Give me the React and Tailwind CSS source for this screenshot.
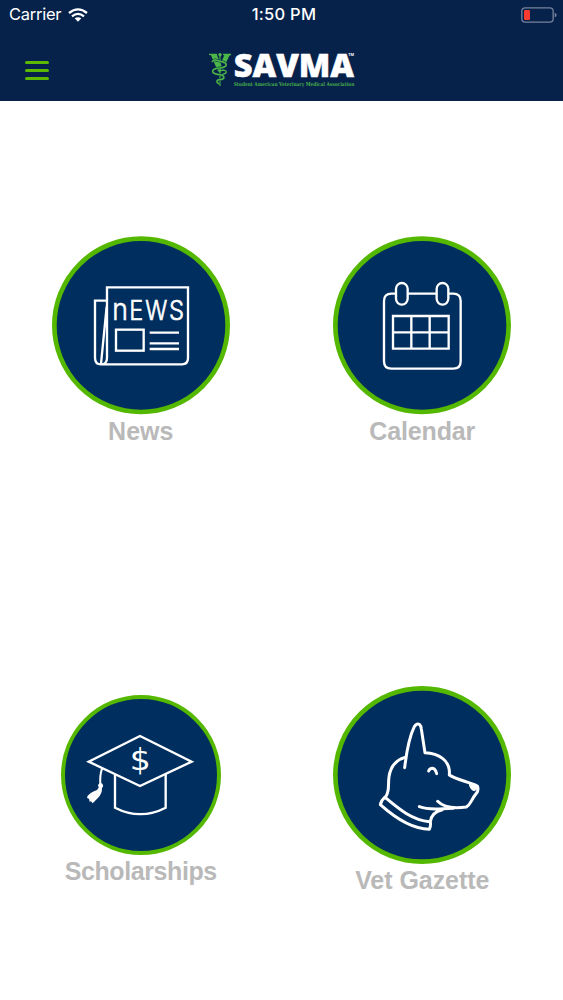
import React from 'react';

function StatusBar() {
  return (
    <div className="grid grid-cols-3 items-center h-[29px] pl-[9px] pr-[6px] text-white">
      <div className="flex items-center gap-[7px]">
        <span className="w-[52px] text-[16.5px] leading-[29px] tracking-[-0.25px]">Carrier</span>
        <svg width="20" height="14" viewBox="0 0 60 42" fill="none" stroke="currentColor" strokeWidth="7">
          <path d="M3 15 Q30 -7 57 15" />
          <path d="M12 25 Q30 10 48 25" />
          <path d="M20 31 Q30 24 40 31 L30 41Z" fill="currentColor" stroke="none" />
        </svg>
      </div>
      <span className="text-center text-[16.5px] leading-[29px] font-medium tracking-[0.25px] pl-[2px]">1:50 PM</span>
      <div className="flex items-center justify-end">
        <svg width="36" height="16" viewBox="0 0 108 48" fill="none">
          <rect x="2.5" y="2.5" width="94" height="43" rx="10" stroke="#76819a" strokeWidth="4" />
          <rect x="9" y="9" width="18" height="30" rx="4" fill="#ff3b30" />
          <path d="M101 17 Q107 19 107 24 Q107 29 101 31Z" fill="#76819a" />
        </svg>
      </div>
    </div>
  );
}

function Logo() {
  return (
    <svg width="165" height="60" viewBox="0 0 495 180" className="overflow-visible">
      <path d="M27 41 H51 V46 L65 78 L60 98 L53 92 L33 46 L27 45Z M69 41 H93 V45 L88 47 L76 73 L64 66 L73 46 L69 45Z" fill="#4cb748" />
      <g fill="none" stroke="#4cb748">
        <path d="M60 42 V138" strokeWidth="3.5" />
        <path d="M36 66 Q42 57 51 61 L72 67 Q83 72 76 79 Q70 84 57 84 Q37 86 38 95 Q40 102 59 104 Q75 107 71 115 Q67 119 58 119 Q48 121 52 128 L60 133" stroke="#06224b" strokeWidth="8" />
        <path d="M36 66 Q42 57 51 61 L72 67 Q83 72 76 79 Q70 84 57 84 Q37 86 38 95 Q40 102 59 104 Q75 107 71 115 Q67 119 58 119 Q48 121 52 128 L60 133" strokeWidth="5" />
        <path d="M58 92 Q80 88 79 97 Q77 102 67 103" strokeWidth="4" />
      </g>
      <circle cx="60" cy="44" r="5" fill="#4cb748" />
      <text x="101" y="111" textLength="361" lengthAdjust="spacingAndGlyphs" fill="#fff" stroke="#fff" strokeWidth="1.5" className="font-['Open_Sans'] font-extrabold text-[96px]">SAVMA</text>
      <text x="445" y="47" textLength="17" lengthAdjust="spacingAndGlyphs" fill="#fff" className="font-['Open_Sans'] font-bold text-[11px]">TM</text>
      <text x="101" y="139" textLength="362" lengthAdjust="spacingAndGlyphs" fill="#46ac49" className="font-['DejaVu_Serif'] font-bold text-[16px]">Student American Veterinary Medical Association</text>
    </svg>
  );
}

function Header() {
  return (
    <header className="h-[101px] bg-[#06224b]">
      <StatusBar />
      <div className="grid grid-cols-[200px_165px_1fr] pt-[11px]">
        <button className="flex flex-col gap-[5.6px] pl-[25px] pt-[21px]" aria-label="Menu">
          <span className="h-[2.6px] w-[24px] rounded-full bg-[#5cb900]" />
          <span className="h-[2.6px] w-[24px] rounded-full bg-[#5cb900]" />
          <span className="h-[2.6px] w-[24px] rounded-full bg-[#5cb900]" />
        </button>
        <Logo />
      </div>
    </header>
  );
}

function NewsIcon() {
  return (
    <svg width="178" height="178" viewBox="21 20 534 534" className="overflow-visible" fill="none" stroke="#fff" strokeWidth="7">
      <circle cx="288" cy="285" r="260" fill="#002f5f" stroke="#55b800" strokeWidth="14" />
      <path d="M186 171 H429 V384 Q429 402 411 402 H168 Q186 402 186 382 Z" />
      <path d="M184 211 H150 V382 Q150 402 168 402 M185 229 L168 401" />
      <rect x="213" y="298" width="83" height="63" />
      <path d="M314 307 H402 M314 339 H402 M314 356 H402" />
      <g fill="#fff" stroke="#fff" strokeWidth="2" className="font-['Inter'] text-[79px] font-light">
        <text x="202" y="269" textLength="47" lengthAdjust="spacingAndGlyphs" className="text-[94px]">n</text>
        <text x="253" y="269" textLength="42" lengthAdjust="spacingAndGlyphs">E</text>
        <text x="301" y="269" textLength="66" lengthAdjust="spacingAndGlyphs">W</text>
        <text x="372" y="269" textLength="45" lengthAdjust="spacingAndGlyphs">S</text>
      </g>
    </svg>
  );
}

function CalendarIcon() {
  return (
    <svg width="178" height="178" viewBox="24 20 534 534" className="overflow-visible" fill="none" stroke="#fff" strokeWidth="7">
      <circle cx="291" cy="285" r="260" fill="#002f5f" stroke="#55b800" strokeWidth="14" />
      <path d="M212 190 H199 Q177 190 177 212 V393 Q177 415 199 415 H385 Q407 415 407 393 V212 Q407 190 385 190 H372 M249 190 H334" />
      <rect x="213" y="158" width="35" height="65" rx="17.5" />
      <rect x="335" y="158" width="35" height="65" rx="17.5" />
      <path d="M204 257 H371 V355 H204 Z M204 306 H371 M259 257 V355 M314 257 V355" />
    </svg>
  );
}

function ScholarshipIcon() {
  return (
    <svg width="160" height="160" viewBox="33 30 480 480" fill="none" stroke="#fff" strokeWidth="7">
      <circle cx="273" cy="270" r="234" fill="#002f5f" stroke="#55b800" strokeWidth="12" />
      <path d="M270 153 L425 230 L270 303 L116 230 Z" />
      <path d="M195 267 V368 Q271 407 347 368 V267" />
      <path d="M156 251 Q149 272 151 298" strokeWidth="6" />
      <path d="M144 300 Q151 289 158 298 Q162 304 156 309 Q157 326 143 340 L128 355 L123 349 L119 350 L117 341 L111 339 L113 332 Q122 323 132 319 Q143 316 146 308 Z" fill="#fff" stroke="none" />
      <text x="239" y="254" textLength="63" lengthAdjust="spacingAndGlyphs" fill="#fff" stroke="none" className="font-['DejaVu_Sans'] text-[93px]">$</text>
    </svg>
  );
}

function DogIcon() {
  return (
    <svg width="178" height="178" viewBox="24 17 534 534" fill="none" stroke="#fff" strokeWidth="9" strokeLinecap="round" strokeLinejoin="round">
      <circle cx="291" cy="284" r="260" fill="#002f5f" stroke="#55b800" strokeWidth="14" />
      <path d="M239 262 C244 220 253 169 268 139 Q276 127 284 133 Q288 137 289 146 L300 217 C339 219 377 238 373 284 C394 298 430 304 457 317 Q461 325 457 335 Q447 347 438 364 Q431 377 424 380 C388 385 357 383 338 363" />
      <path d="M283 379 C307 388 330 387 355 385 L385 384 M352 388 C330 393 318 408 316 424 Q318 438 313 447 C260 446 205 408 166 373 Q169 359 182 349 C198 330 184 300 197 270 Q208 240 240 231" />
      <path d="M180 351 C217 382 260 420 314 424" />
      <path d="M311 272 Q314 264 322 264 Q331 265 335 280" />
      <path d="M433 310 L457 318 Q458 328 448 331 Q435 329 433 310Z" fill="#fff" strokeWidth="3" />
    </svg>
  );
}

const tiles = [
  { label: 'News', Icon: NewsIcon, tracking: 'tracking-normal' },
  { label: 'Calendar', Icon: CalendarIcon, tracking: 'tracking-[-0.15px]' },
  { label: 'Scholarships', Icon: ScholarshipIcon, tracking: 'tracking-[-0.4px]' },
  { label: 'Vet Gazette', Icon: DogIcon, tracking: 'tracking-[-0.05px]' },
];

export default function App() {
  return (
    <div className="flex flex-col h-[1000px] w-[563px] bg-white font-['Inter',sans-serif]">
      <Header />
      <main className="grid grid-cols-2 grid-rows-[449px_450px]">
        {tiles.map(({ label, Icon, tracking }) => (
          <button key={label} className="flex flex-col items-center justify-center pt-[34px]">
            <Icon />
            <span className={`h-[34px] font-['Liberation_Sans',sans-serif] text-[25px] leading-[33px] font-bold text-[#b9b9b9] ${tracking}`}>{label}</span>
          </button>
        ))}
      </main>
    </div>
  );
}
